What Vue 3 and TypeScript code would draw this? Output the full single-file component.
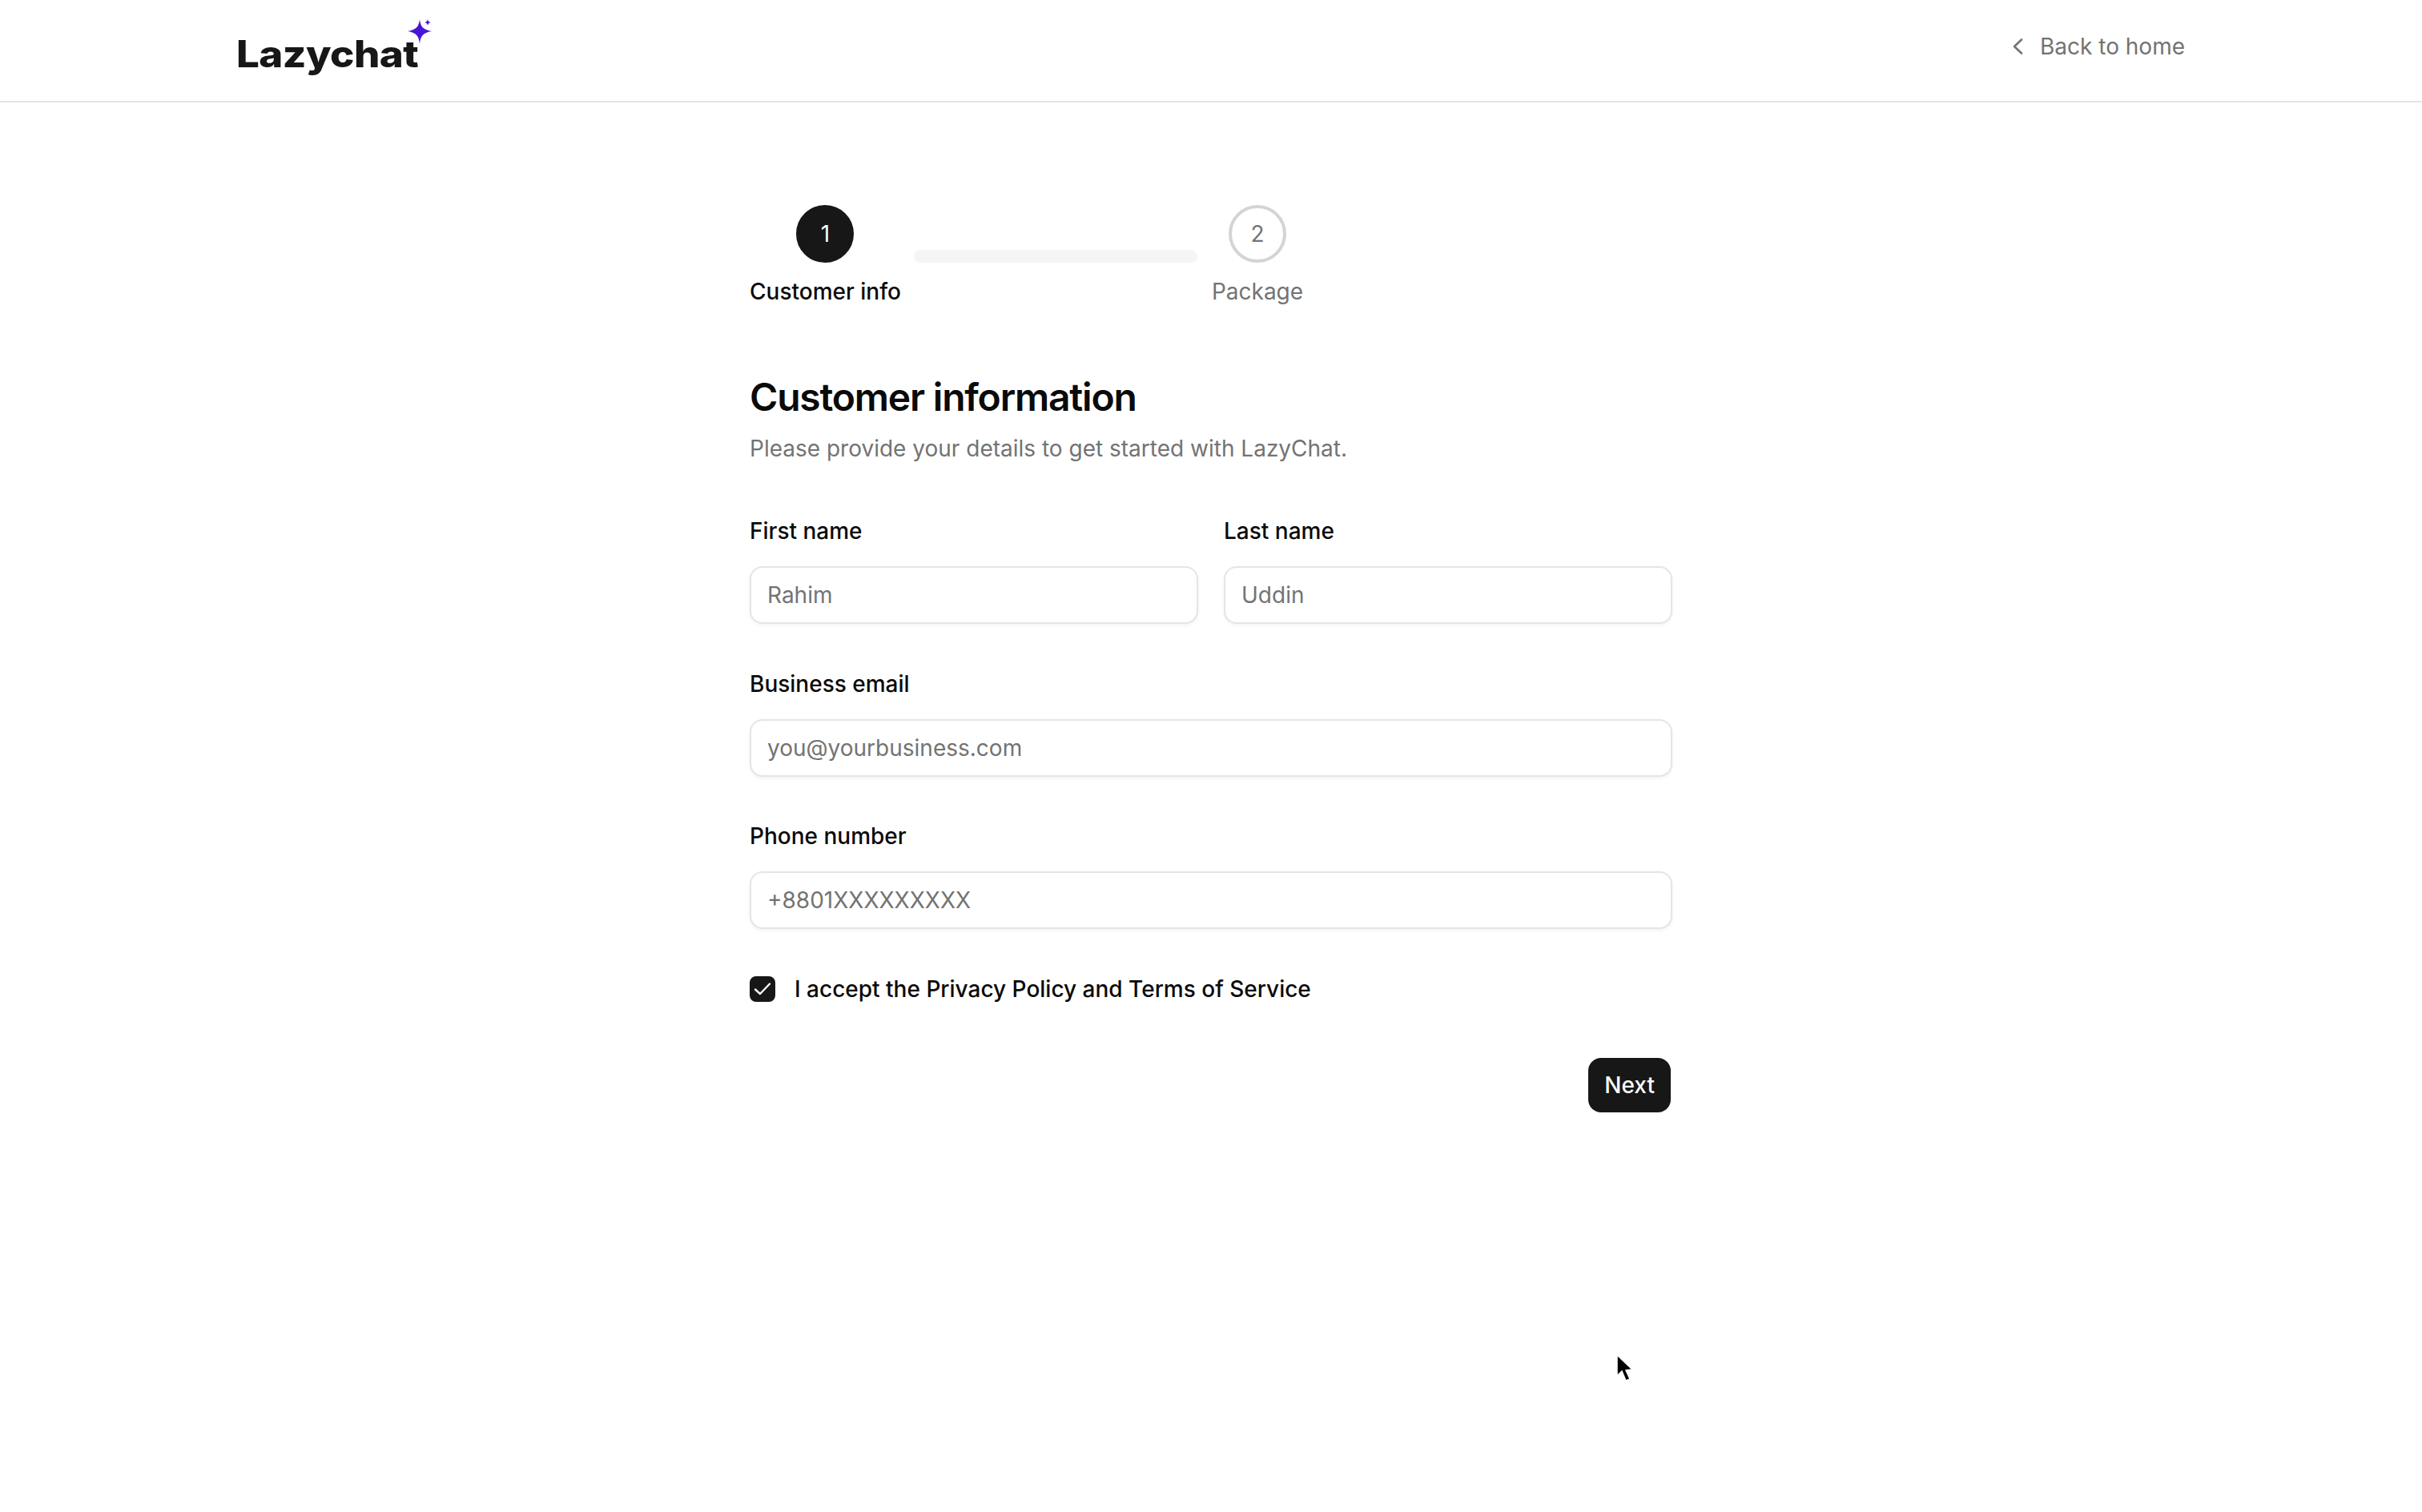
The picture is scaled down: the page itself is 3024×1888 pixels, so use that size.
<script setup lang="ts">
import { ref } from 'vue'

const firstName = ref('')
const lastName = ref('')
const email = ref('')
const phone = ref('')
const accepted = ref(true)
</script>

<template>
  <div class="page">
    <header class="topbar">
      <div class="topbar-inner">
        <a class="logo" href="#">
          <span class="logo-text">Lazychat</span>
          <svg class="logo-star" width="40" height="44" viewBox="0 0 40 44">
            <path d="M17 8 C18 17 21 21 32 23 C21 25 18 29 17 39 C16 29 13 25 2 23 C13 21 16 17 17 8Z" fill="#4a14d8" />
            <path d="M27 8 C27.400 10.500 28.300 11.500 31 12 C28.300 12.500 27.400 13.500 27 16 C26.600 13.500 25.700 12.500 23 12 C25.700 11.500 26.600 10.500 27 8Z" fill="#4a14d8" />
          </svg>
        </a>
        <a class="back" href="#">
          <svg width="24" height="24" viewBox="0 0 24 24" fill="none" stroke="#737373" stroke-width="2.600" stroke-linecap="round" stroke-linejoin="round">
            <path d="M17 3.500 L8 12 L17 20.500" />
          </svg>
          <span>Back to home</span>
        </a>
      </div>
    </header>

    <main class="content">
      <div class="stepper">
        <div class="step">
          <div class="dot active">1</div>
          <div class="step-label">Customer info</div>
        </div>
        <div class="step-bar"></div>
        <div class="step muted">
          <div class="dot">2</div>
          <div class="step-label">Package</div>
        </div>
      </div>

      <h1>Customer information</h1>
      <p class="lead">Please provide your details to get started with LazyChat.</p>

      <form class="form" @submit.prevent>
        <div class="row">
          <label class="field">
            <span>First name</span>
            <input v-model="firstName" type="text" placeholder="Rahim" />
          </label>
          <label class="field">
            <span>Last name</span>
            <input v-model="lastName" type="text" placeholder="Uddin" />
          </label>
        </div>
        <label class="field">
          <span>Business email</span>
          <input v-model="email" type="email" placeholder="you@yourbusiness.com" />
        </label>
        <label class="field">
          <span>Phone number</span>
          <input v-model="phone" type="tel" placeholder="+8801XXXXXXXXX" />
        </label>

        <div class="terms" @click="accepted = !accepted">
          <span class="check" :class="{ on: accepted }">
            <svg v-if="accepted" width="24" height="24" viewBox="0 0 24 24" fill="none" stroke="#fafafa" stroke-width="2.400" stroke-linecap="round" stroke-linejoin="round">
              <path d="M3 12.500 L9 18 L21 5.500" />
            </svg>
          </span>
          <span>I accept the Privacy Policy and Terms of Service</span>
        </div>

        <div class="actions">
          <button class="next" type="submit">Next</button>
        </div>
      </form>
    </main>

    <svg class="cursor" width="24" height="36" viewBox="0 0 24 36">
      <path d="M2 1 L2 27 L8 21 L13 33 L18 31 L13 20 L21 19Z" fill="#000" stroke="#fff" stroke-width="1.500" />
    </svg>
  </div>
</template>

<style>
html,
body {
  margin: 0;
  background: #fff;
}
</style>

<style scoped>
.page {
  position: relative;
  min-height: 1888px;
  font-family: Inter, 'Liberation Sans', sans-serif;
  font-size: 28px;
  color: #0a0a0a;
  background: #fff;
}

.topbar {
  height: 128px;
  box-sizing: border-box;
  border-bottom: 2px solid #e5e5e5;
}

.topbar-inner {
  width: 2432px;
  height: 100%;
  margin: 0 auto;
  display: flex;
  align-items: flex-start;
  justify-content: space-between;
}

.logo {
  position: relative;
  display: block;
  margin-top: 35px;
  color: #171717;
  text-decoration: none;
}

.logo-text {
  display: block;
  font-family: Inter, sans-serif;
  font-size: 46px;
  font-weight: 800;
  line-height: 64px;
  letter-spacing: -0.500px;
  transform: translateX(-1px) scaleX(1.110);
  transform-origin: left center;
}

.logo-star {
  position: absolute;
  left: 211px;
  top: -19px;
}

.back {
  display: flex;
  align-items: center;
  gap: 16px;
  margin-top: 38px;
  line-height: 40px;
  color: #737373;
  text-decoration: none;
}

.content {
  width: 1152px;
  margin: 0 auto;
  padding-top: 128px;
}

.stepper {
  display: flex;
  gap: 16px;
}

.step {
  display: flex;
  flex-direction: column;
  align-items: center;
  gap: 16px;
}

.step.muted {
  margin-left: 2px;
  color: #737373;
}

.dot {
  width: 72px;
  height: 72px;
  box-sizing: border-box;
  border: 4px solid #d4d4d4;
  border-radius: 50%;
  display: flex;
  align-items: center;
  justify-content: center;
  color: #737373;
}

.dot.active {
  border-color: #171717;
  background: #171717;
  color: #fafafa;
}

.step-label {
  font-weight: 500;
  line-height: 40px;
}

.step.muted .step-label {
  font-weight: 400;
}

.step-bar {
  width: 354px;
  height: 16px;
  margin-top: 56px;
  border-radius: 8px;
  background: #f5f5f5;
}

h1 {
  margin: 80px 0 0;
  font-size: 48px;
  font-weight: 600;
  line-height: 64px;
  letter-spacing: -1.200px;
}

.lead {
  margin: 12px 0 0;
  line-height: 40px;
  color: #737373;
}

.form {
  display: flex;
  flex-direction: column;
  gap: 54.500px;
  margin-top: 63px;
}

.row {
  display: grid;
  grid-template-columns: 1fr 1fr;
  gap: 32px;
}

.field {
  display: flex;
  flex-direction: column;
  gap: 24px;
}

.field span {
  font-weight: 500;
  line-height: 40px;
}

.field input {
  height: 72px;
  box-sizing: border-box;
  width: 100%;
  padding: 0 20px;
  border: 2px solid #e5e5e5;
  border-radius: 16px;
  outline: none;
  background: #fff;
  box-shadow: 0 2px 4px rgba(0, 0, 0, 0.05);
  font: inherit;
  color: #0a0a0a;
}

.field input::placeholder {
  color: #737373;
}

.terms {
  display: flex;
  align-items: center;
  gap: 24px;
  font-weight: 500;
  line-height: 40px;
  cursor: pointer;
}

.check {
  width: 32px;
  height: 32px;
  box-sizing: border-box;
  border: 2px solid #e5e5e5;
  border-radius: 8px;
  display: flex;
  align-items: center;
  justify-content: center;
}

.check.on {
  border-color: #171717;
  background: #171717;
}

.actions {
  display: flex;
  justify-content: flex-end;
  margin-top: 12px;
  padding-right: 2px;
}

.next {
  height: 68px;
  padding: 0 20px;
  border: 0;
  border-radius: 16px;
  background: #171717;
  color: #fafafa;
  font: inherit;
  font-weight: 500;
  cursor: pointer;
}

.cursor {
  position: absolute;
  left: 2017px;
  top: 1691px;
}
</style>
